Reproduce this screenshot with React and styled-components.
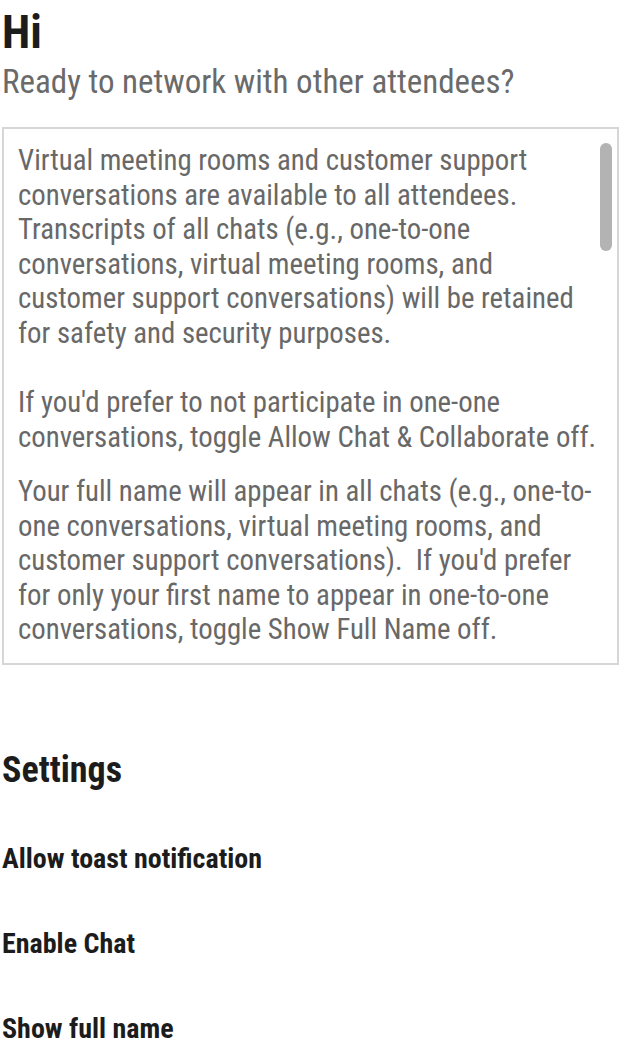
import React from "react";
import styled, { createGlobalStyle } from "styled-components";

const GlobalStyle = createGlobalStyle`
  html, body { margin: 0; padding: 0; background: #ffffff; }
  body { font-family: "Roboto Condensed", "Roboto", "Liberation Sans", sans-serif; font-stretch: condensed; }
  * { box-sizing: border-box; }
`;

const Page = styled.main`
  display: flex;
  flex-direction: column;
  padding: 6px 1px 0 2px;
`;

const Title = styled.h1`
  margin: 0;
  font-size: 46px;
  line-height: 52px;
  font-weight: 700;
  color: #1c1c1c;
`;

const Subtitle = styled.p`
  margin: 4px 0 0;
  font-size: 33px;
  line-height: 40px;
  font-weight: 400;
  color: #6a6a6a;
`;

const NoticeBox = styled.section`
  position: relative;
  margin-top: 25px;
  border: 2px solid #d6d6d6;
  padding: 14px 20px 16px 14px;
  overflow: hidden;
`;

const Paragraph = styled.p`
  margin: 0;
  font-size: 28.8px;
  line-height: 34.56px;
  color: #686868;
  white-space: nowrap;
  & + & { margin-top: 20px; }
`;

const ScrollThumb = styled.div`
  position: absolute;
  top: 14px;
  right: 5px;
  width: 12px;
  height: 108px;
  border-radius: 6px;
  background: #b3b3b3;
`;

const SettingsTitle = styled.h2`
  margin: 83px 0 0;
  font-size: 36px;
  line-height: 44px;
  font-weight: 700;
  color: #1c1c1c;
`;

const SettingsList = styled.ul`
  list-style: none;
  margin: 50px 0 0;
  padding: 0;
  display: flex;
  flex-direction: column;
  gap: 51px;
`;

const SettingRow = styled.li`
  display: flex;
  align-items: center;
  justify-content: space-between;
  font-size: 28px;
  line-height: 34px;
  font-weight: 700;
  color: #1c1c1c;
`;

const settings = ["Allow toast notification", "Enable Chat", "Show full name"];

export default function App() {
  return (
    <>
      <GlobalStyle />
      <Page>
        <Title>Hi</Title>
        <Subtitle>Ready to network with other attendees?</Subtitle>
        <NoticeBox>
          <Paragraph>
            Virtual meeting rooms and customer support<br />
            conversations are available to all attendees.<br />
            Transcripts of all chats (e.g., one-to-one<br />
            conversations, virtual meeting rooms, and<br />
            customer support conversations) will be retained<br />
            for safety and security purposes.<br />
            <br />
            If you'd prefer to not participate in one-one<br />
            conversations, toggle Allow Chat &amp; Collaborate off.
          </Paragraph>
          <Paragraph>
            Your full name will appear in all chats (e.g., one-to-<br />
            one conversations, virtual meeting rooms, and<br />
            customer support conversations).&nbsp; If you'd prefer<br />
            for only your first name to appear in one-to-one<br />
            conversations, toggle Show Full Name off.
          </Paragraph>
          <ScrollThumb />
        </NoticeBox>
        <SettingsTitle>Settings</SettingsTitle>
        <SettingsList>
          {settings.map((s) => (
            <SettingRow key={s}>{s}</SettingRow>
          ))}
        </SettingsList>
      </Page>
    </>
  );
}
